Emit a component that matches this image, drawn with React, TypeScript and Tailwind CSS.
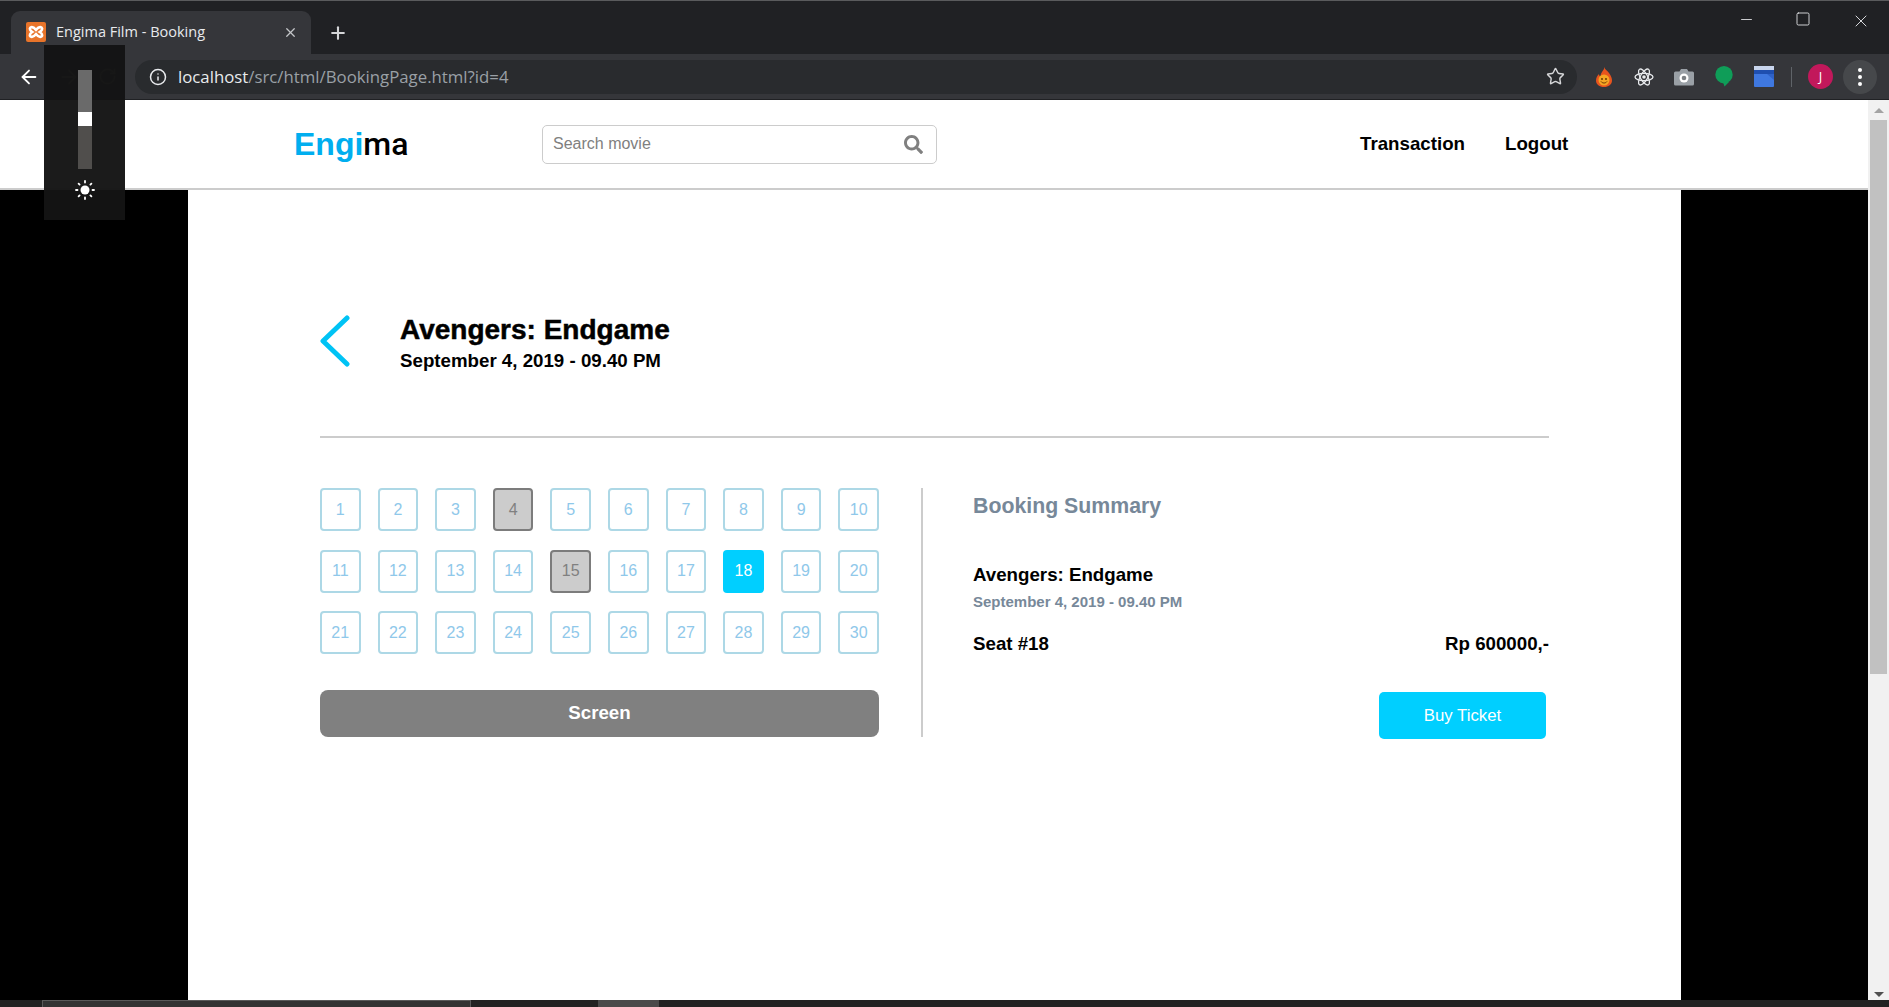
import { ArrowLeft, ArrowRight, Info, Minus, Plus, RotateCw, Square, Star, X } from "lucide-react";
import { FaSearch } from "react-icons/fa";

const seats = Array.from({ length: 30 }, (_, i) => i + 1);
const taken = [4, 15];
const selected = 18;

function XamppIcon() {
  return (
    <svg width="20" height="20" viewBox="0 0 20 20">
      <rect width="20" height="20" rx="2" fill="#e8742a" />
      <path
        d="M4.500 5.500c2 -1.200 3.800 .3 5.500 2.300c1.700 -2 3.500 -3.500 5.500 -2.300c1.500 1.300 .2 3.200 -1.800 4.500c2 1.300 3.300 3.200 1.800 4.500c-2 1.200 -3.800 -.3 -5.500 -2.300c-1.700 2 -3.500 3.500 -5.500 2.300c-1.500 -1.300 -.2 -3.200 1.800 -4.500c-2 -1.300 -3.300 -3.200 -1.800 -4.500z"
        fill="none"
        stroke="#fff"
        strokeWidth="2.600"
      />
    </svg>
  );
}

function FireIcon() {
  return (
    <svg width="16" height="20" viewBox="0 0 16 20">
      <path d="M8 0c1 3 3 3 5 6c2 3 3 5 3 7.500c0 4 -3.500 6.500 -8 6.500s-8 -2.500 -8 -6.500c0 -3 1.500 -5 3 -6.500c0 1 .5 2 1.500 2.500c0 -3.500 2 -5 3.500 -7.500z" fill="#e8541e" />
      <circle cx="8" cy="13" r="5.500" fill="#f5a623" />
      <circle cx="6" cy="12" r=".9" fill="#5a2a00" />
      <circle cx="10" cy="12" r=".9" fill="#5a2a00" />
      <path d="M5 14.500c1.500 2 4.500 2 6 0" fill="none" stroke="#5a2a00" strokeWidth=".9" />
    </svg>
  );
}

function AtomIcon() {
  return (
    <svg width="20" height="20" viewBox="-10 -10 20 20" fill="none" stroke="#e8eaed" strokeWidth="1.300">
      <ellipse rx="9" ry="3.600" />
      <ellipse rx="9" ry="3.600" transform="rotate(60)" />
      <ellipse rx="9" ry="3.600" transform="rotate(120)" />
      <circle r="1.800" fill="#e8eaed" stroke="none" />
    </svg>
  );
}

function CameraIcon() {
  return (
    <svg width="20" height="18" viewBox="0 0 20 18">
      <path d="M1.500 3.500h4l1.500 -2.500h6l1.500 2.500h4a1.500 1.500 0 0 1 1.500 1.500v11a1.500 1.500 0 0 1 -1.500 1.500h-17a1.500 1.500 0 0 1 -1.500 -1.500v-11a1.500 1.500 0 0 1 1.500 -1.500z" fill="#9aa0a6" />
      <circle cx="10" cy="10" r="4.500" fill="#fff" />
      <circle cx="10" cy="10" r="2.300" fill="#7d8185" />
    </svg>
  );
}

function HangoutsIcon() {
  return (
    <svg width="18" height="21" viewBox="0 0 18 21">
      <circle cx="9" cy="8.700" r="8.700" fill="#0f9d58" />
      <path d="M8 16h6l-4.500 4.500z" fill="#0f9d58" />
    </svg>
  );
}

function BoardIcon() {
  return (
    <svg width="20" height="21" viewBox="0 0 20 21">
      <rect y="2" width="20" height="19" rx="1" fill="#3f78e0" />
      <rect y="0" width="20" height="4" fill="#c9d6ee" />
      <rect y="4" width="20" height="4" fill="#1f4fb0" />
      <path d="M13 8h7v6z" fill="#2f62c8" />
    </svg>
  );
}

function BrightnessOverlay() {
  return (
    <div className="absolute left-[44px] top-[45px] flex h-[175px] w-[81px] flex-col items-center bg-[#141414]/97 pt-[25px]">
      <div className="flex h-[99px] w-[14px] flex-col">
        <div className="h-[42px] bg-[#6a6a6a]" />
        <div className="h-[14px] bg-white" />
        <div className="flex-1 bg-[#504e4c]" />
      </div>
      <svg className="mt-[11px]" width="20" height="20" viewBox="-10 -10 20 20" stroke="#fff" strokeWidth="1.800" strokeLinecap="round">
        <circle r="4.500" fill="#fff" stroke="none" />
        <path d="M0 -9v1.500M0 7.500v1.500M-9 0h1.500M7.500 0h1.500M-6.400 -6.400l1 1M5.400 5.400l1 1M-6.400 6.400l1 -1M5.400 -5.400l1 -1" />
      </svg>
    </div>
  );
}

function Seat({ n }: { n: number }) {
  if (n === selected) {
    return <div className="flex h-[43px] items-center justify-center rounded-[4px] bg-[#00cfff] text-white">{n}</div>;
  }
  if (taken.includes(n)) {
    return (
      <div className="flex h-[43px] items-center justify-center rounded-[4px] border-2 border-[#7c7c7c] bg-[#cccccc] text-[#808080]">
        {n}
      </div>
    );
  }
  return (
    <div className="flex h-[43px] items-center justify-center rounded-[4px] border-2 border-[#add8e6] text-[#8fc8ea]">
      {n}
    </div>
  );
}

export default function App() {
  return (
    <div className="relative flex h-[1007px] w-[1889px] flex-col overflow-hidden bg-black font-['Liberation_Sans',sans-serif]">
      {/* tab strip */}
      <div className="flex h-[54px] shrink-0 items-end border-t border-[#5a5b5d] bg-[#202124] pl-[11px] text-[#e8eaed]">
        <div className="flex h-[43px] w-[300px] items-center rounded-t-[9px] bg-[#35363a] pb-[1px] pl-[15px] pr-[13px] font-['Open_Sans',sans-serif] text-[14.500px]">
          <XamppIcon />
          <span className="ml-[10px] flex-1">Engima Film - Booking</span>
          <X size={15} className="text-[#c4c6c9]" />
        </div>
        <div className="mb-[5px] ml-[17px] flex h-[32px] items-center">
          <Plus size={20} strokeWidth={2.5} className="text-[#d5d6d8]" />
        </div>
        <div className="ml-auto flex h-[53px] items-start pt-[10px]">
          <div className="flex w-[57px] justify-center"><Minus size={17} strokeWidth={1.2} /></div>
          <div className="flex w-[57px] justify-center pr-[2px]"><Square size={16} strokeWidth={1.3} /></div>
          <div className="flex w-[57px] justify-center pl-[1px]"><X size={20} strokeWidth={1.1} /></div>
        </div>
      </div>

      {/* toolbar */}
      <div className="flex h-[46px] shrink-0 items-center border-b border-[#202124] bg-[#35363a] pl-[18px] pr-[9px]">
        <ArrowLeft size={22} strokeWidth={2} className="text-white" />
        <ArrowRight size={22} className="ml-[18px] text-[#777]" />
        <RotateCw size={19} className="ml-[18px] text-[#777]" />
        <div className="ml-[18px] flex h-[34px] w-[1442px] items-center rounded-full bg-[#292b2e] pl-[14px] pr-[12px]">
          <Info size={18} strokeWidth={2} className="text-[#e8eaed]" />
          <span className="ml-[11px] flex-1 font-['Open_Sans',sans-serif] text-[16.800px] text-[#9aa0a6]">
            <span className="text-[#e8eaed]">localhost</span>/src/html/BookingPage.html?id=4
          </span>
          <Star size={19} strokeWidth={1.8} className="text-[#d5d6d8]" />
        </div>
        <div className="ml-[17px] flex w-[20px] justify-center"><FireIcon /></div>
        <div className="ml-[20px] flex w-[20px] justify-center"><AtomIcon /></div>
        <div className="ml-[20px] flex w-[20px] justify-center"><CameraIcon /></div>
        <div className="ml-[20px] flex w-[20px] justify-center"><HangoutsIcon /></div>
        <div className="ml-[20px] flex w-[20px] justify-center"><BoardIcon /></div>
        <div className="ml-[17px] h-[20px] w-px bg-[#5f6368]" />
        <div className="ml-[16px] flex h-[25px] w-[25px] items-center justify-center rounded-full bg-[#c2185b] font-['Open_Sans',sans-serif] text-[13px] text-white">
          J
        </div>
        <div className="ml-[10px] flex h-[34px] w-[34px] flex-col items-center justify-center gap-[3px] rounded-full bg-[#46484b]">
          <span className="h-[4px] w-[4px] rounded-full bg-white" />
          <span className="h-[4px] w-[4px] rounded-full bg-white" />
          <span className="h-[4px] w-[4px] rounded-full bg-white" />
        </div>
      </div>

      {/* page + scrollbar */}
      <div className="flex min-h-0 flex-1">
        <div className="flex min-w-0 flex-1 flex-col">
          <header className="flex h-[90px] shrink-0 items-center border-b-2 border-[#cccccc] bg-white pl-[294px]">
            <div className="w-[248px] text-[32px] font-bold leading-none">
              <span className="text-[#00aeef]">Engi</span>
              <span className="font-['Roboto',sans-serif] font-medium text-black">ma</span>
            </div>
            <div className="flex h-[39px] w-[395px] items-center rounded-[5px] border border-[#cccccc] pl-[10px] pr-[13px]">
              <span className="flex-1 pb-[1px] text-[16px] text-[#808080]">Search movie</span>
              <FaSearch size={19} className="text-[#808080]" />
            </div>
            <span className="ml-[423px] text-[18.720px] font-bold text-black">Transaction</span>
            <span className="ml-[40px] text-[18.720px] font-bold text-black">Logout</span>
          </header>

          <div className="flex min-h-0 flex-1 pl-[188px]">
            <main className="w-[1493px] bg-white pl-[132px] pr-[132px]">
              <div className="flex h-[248px] border-b-2 border-[#cccccc]">
                <svg className="mt-[125px]" width="30" height="52" viewBox="0 0 30 52" fill="none" stroke="#00c3f5" strokeWidth="5" strokeLinecap="round" strokeLinejoin="round">
                  <path d="M27 3L3 26l24 23" />
                </svg>
                <div className="ml-[50px] mt-[125px] text-black">
                  <h1 className="text-[28px] font-bold leading-[30px] [-webkit-text-stroke:0.5px_black]">Avengers: Endgame</h1>
                  <p className="mt-[5px] text-[18.720px] font-bold leading-[22px]">September 4, 2019 - 09.40 PM</p>
                </div>
              </div>

              <div className="mt-[50px] flex h-[249px]">
                <div className="w-[559px]">
                  <div className="grid grid-cols-[repeat(10,40.500px)] justify-between gap-y-[18.500px] text-[16px]">
                    {seats.map((n) => (
                      <Seat key={n} n={n} />
                    ))}
                  </div>
                  <div className="mt-[36px] flex h-[47px] items-center justify-center rounded-[8px] bg-[#808080] text-[18.720px] font-bold text-white">
                    Screen
                  </div>
                </div>
                <div className="ml-[42px] w-[2px] bg-[#cccccc]" />
                <div className="ml-[50px] flex-1 pt-[5px]">
                  <h2 className="text-[21.300px] font-bold leading-[26px] text-[#778899]">Booking Summary</h2>
                  <p className="mt-[45px] text-[18.720px] font-bold leading-[22px] text-black">Avengers: Endgame</p>
                  <p className="mt-[7px] text-[15px] font-bold leading-[18px] text-[#778899]">September 4, 2019 - 09.40 PM</p>
                  <div className="mt-[22px] flex justify-between text-[18.720px] font-bold leading-[22px] text-black">
                    <span>Seat #18</span>
                    <span>Rp 600000,-</span>
                  </div>
                  <div className="mt-[37px] flex justify-end pr-[3px]">
                    <div className="flex h-[47px] w-[167px] items-center justify-center rounded-[5px] bg-[#00cfff] text-[16.800px] text-white">
                      Buy Ticket
                    </div>
                  </div>
                </div>
              </div>
            </main>
          </div>
        </div>

        {/* scrollbar */}
        <div className="flex w-[21px] shrink-0 flex-col items-center bg-[#f1f1f1]">
          <div className="mt-[8px] h-0 w-0 border-x-[5px] border-b-[5px] border-x-transparent border-b-[#a3a3a3]" />
          <div className="mt-[7px] h-[554px] w-[17px] bg-[#c1c1c1]" />
          <div className="mt-auto mb-[3px] h-0 w-0 border-x-[5px] border-t-[5px] border-x-transparent border-t-[#505050]" />
        </div>
      </div>

      {/* horizontal bar at the window edge */}
      <div className="flex h-[7px] shrink-0 bg-[#222222]">
        <div className="ml-[42px] w-[429px] border-x border-t border-[#5a5a5a] bg-[#333333]" />
        <div className="ml-[127px] w-[61px] bg-[#4a4a4a]" />
      </div>

      <BrightnessOverlay />
    </div>
  );
}
